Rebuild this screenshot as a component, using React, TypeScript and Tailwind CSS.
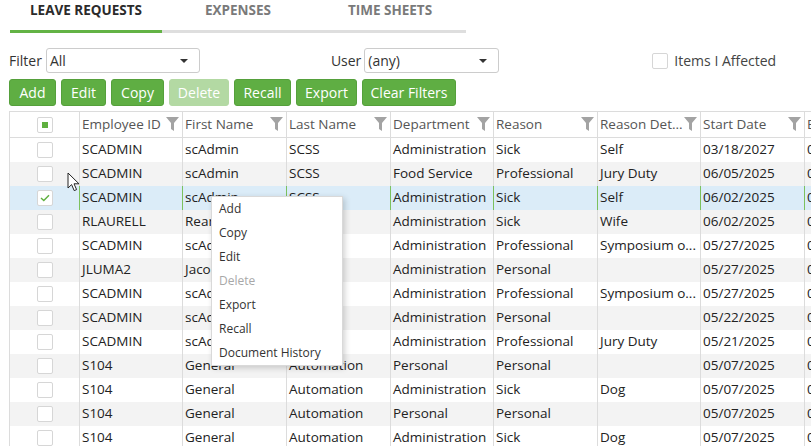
import { useState } from "react";

interface Row {
  empId: string;
  first: string;
  last: string;
  dept: string;
  reason: string;
  detail: string;
  start: string;
  end: string;
}

const rows: Row[] = [
  { empId: "SCADMIN", first: "scAdmin", last: "SCSS", dept: "Administration", reason: "Sick", detail: "Self", start: "03/18/2027", end: "03/18/2027" },
  { empId: "SCADMIN", first: "scAdmin", last: "SCSS", dept: "Food Service", reason: "Professional", detail: "Jury Duty", start: "06/05/2025", end: "06/05/2025" },
  { empId: "SCADMIN", first: "scAdmin", last: "SCSS", dept: "Administration", reason: "Sick", detail: "Self", start: "06/02/2025", end: "06/02/2025" },
  { empId: "RLAURELL", first: "Reanna", last: "Laurell", dept: "Administration", reason: "Sick", detail: "Wife", start: "06/02/2025", end: "06/02/2025" },
  { empId: "SCADMIN", first: "scAdmin", last: "SCSS", dept: "Administration", reason: "Professional", detail: "Symposium o...", start: "05/27/2025", end: "05/28/2025" },
  { empId: "JLUMA2", first: "Jacob", last: "Luma", dept: "Administration", reason: "Personal", detail: "", start: "05/27/2025", end: "05/27/2025" },
  { empId: "SCADMIN", first: "scAdmin", last: "SCSS", dept: "Administration", reason: "Professional", detail: "Symposium o...", start: "05/27/2025", end: "05/28/2025" },
  { empId: "SCADMIN", first: "scAdmin", last: "SCSS", dept: "Administration", reason: "Personal", detail: "", start: "05/22/2025", end: "05/22/2025" },
  { empId: "SCADMIN", first: "scAdmin", last: "SCSS", dept: "Administration", reason: "Professional", detail: "Jury Duty", start: "05/21/2025", end: "05/21/2025" },
  { empId: "S104", first: "General", last: "Automation", dept: "Personal", reason: "Personal", detail: "", start: "05/07/2025", end: "05/07/2025" },
  { empId: "S104", first: "General", last: "Automation", dept: "Administration", reason: "Sick", detail: "Dog", start: "05/07/2025", end: "05/07/2025" },
  { empId: "S104", first: "General", last: "Automation", dept: "Personal", reason: "Personal", detail: "", start: "05/07/2025", end: "05/07/2025" },
  { empId: "S104", first: "General", last: "Automation", dept: "Administration", reason: "Sick", detail: "Dog", start: "05/07/2025", end: "05/07/2025" },
];

const columns = [
  { label: "Employee ID", width: "w-[103px]", key: "empId" },
  { label: "First Name", width: "w-[104px]", key: "first" },
  { label: "Last Name", width: "w-[104px]", key: "last" },
  { label: "Department", width: "w-[103px]", key: "dept" },
  { label: "Reason", width: "w-[104px]", key: "reason" },
  { label: "Reason Det...", width: "w-[103px]", key: "detail" },
  { label: "Start Date", width: "w-[104px]", key: "start" },
  { label: "End Date", width: "w-[104px]", key: "end" },
] as const;

const buttons = [
  { label: "Add", width: "w-[47px]" },
  { label: "Edit", width: "w-[45px]" },
  { label: "Copy", width: "w-[53px]" },
  { label: "Delete", width: "w-[60px]", disabled: true },
  { label: "Recall", width: "w-[57px]" },
  { label: "Export", width: "w-[61px]" },
  { label: "Clear Filters", width: "w-[94px]" },
];

const menuItems = ["Add", "Copy", "Edit", "Delete", "Export", "Recall", "Document History"];

function Funnel() {
  return (
    <svg width="13" height="14" viewBox="0 0 13 14" className="shrink-0">
      <path d="M0 0H13L8 6V14L5 12V6Z" fill="#a3a3a3" />
    </svg>
  );
}

function Caret() {
  return (
    <svg width="8" height="4" viewBox="0 0 8 4">
      <path d="M0 0H8L4 4Z" fill="#333" />
    </svg>
  );
}

function Checkbox({ checked, partial }: { checked?: boolean; partial?: boolean }) {
  return (
    <div className="w-[16px] h-[16px] rounded-[2px] border border-[#d6d6d6] bg-white flex items-center justify-center">
      {partial && <div className="w-[6px] h-[6px] bg-[#5fb03f]" />}
      {checked && (
        <svg width="10" height="8" viewBox="0 0 10 8">
          <path d="M1 4L3.8 6.6L9 1.2" fill="none" stroke="#5fb03f" strokeWidth="1.4" />
        </svg>
      )}
    </div>
  );
}

export default function App() {
  const [tab] = useState(0);

  return (
    <div className="relative w-[811px] h-[446px] overflow-hidden bg-white text-[#333]" style={{ fontFamily: '"Open Sans", sans-serif' }}>
      {/* Tabs */}
      <div className="flex ml-[10px]">
        {["LEAVE REQUESTS", "EXPENSES", "TIME SHEETS"].map((t, i) => (
          <div
            key={t}
            className={`w-[152px] h-[33px] flex items-start justify-center text-[13.5px] leading-[20px] font-bold border-b-[3px] ${
              i === tab ? "text-[#2b2b2b] border-[#63b345]" : "text-[#7a7a7a] border-[#dedede]"
            }`}
          >
            {t}
          </div>
        ))}
      </div>

      {/* Filters */}
      <div className="flex items-center mt-[15px] ml-[9px] h-[25px] text-[14px]">
        <span className="text-[#333]">Filter</span>
        <div className="ml-[4px] w-[154px] h-[25px] border border-[#ccc] rounded-[3px] flex items-center justify-between pl-[3px] pr-[11px]">
          <span>All</span>
          <Caret />
        </div>
        <span className="ml-[131px]">User</span>
        <div className="ml-[3px] w-[135px] h-[25px] border border-[#ccc] rounded-[3px] flex items-center justify-between pl-[3px] pr-[11px]">
          <span>(any)</span>
          <Caret />
        </div>
        <div className="ml-[153px] w-[16px] h-[16px] border border-[#d6d6d6] rounded-[2px]" />
        <span className="ml-[6px] text-[#444]">Items I Affected</span>
      </div>

      {/* Action buttons */}
      <div className="flex gap-[5px] mt-[6px] ml-[9px]">
        {buttons.map((b) => (
          <div
            key={b.label}
            className={`${b.width} h-[27px] rounded-[3px] flex items-center justify-center text-[14px] text-white border ${
              b.disabled ? "bg-[#b3d9a3] border-[#b3d9a3]" : "bg-[#5fae43] border-[#55a03b]"
            }`}
          >
            {b.label}
          </div>
        ))}
      </div>

      {/* Grid */}
      <div className="mt-[5px] ml-[9px] w-[900px] border-l border-t border-[#dcdcdc] text-[13.5px]">
        <div className="flex h-[26px] border-b border-[#dcdcdc] text-[#555]">
          <div className="w-[70px] shrink-0 flex items-center justify-center border-r border-[#dcdcdc]">
            <Checkbox partial />
          </div>
          {columns.map((c) => (
            <div key={c.label} className={`${c.width} shrink-0 flex items-center justify-between pl-[2px] pr-[3px] pb-[1px] border-r border-[#dcdcdc]`}>
              <span className="whitespace-nowrap">{c.label}</span>
              <Funnel />
            </div>
          ))}
        </div>
        {rows.map((r, i) => {
          const selected = i === 2;
          const bg = selected ? "bg-[#dbecf8]" : i % 2 === 1 ? "bg-[#f3f3f3]" : "bg-white";
          const line = selected ? "border-[#7cc15e]" : "border-[#dcdcdc]";
          return (
            <div key={i} className={`flex h-[24px] ${bg}`}>
              <div className={`w-[70px] shrink-0 flex items-center justify-center border-r ${line}`}>
                <Checkbox checked={selected} />
              </div>
              {columns.map((c) => (
                <div key={c.key} className={`${c.width} shrink-0 flex items-center pl-[2px] pb-[1px] border-r ${line} whitespace-nowrap overflow-hidden text-[#222]`}>
                  {r[c.key]}
                </div>
              ))}
            </div>
          );
        })}
      </div>

      {/* Context menu */}
      <div className="absolute left-[211px] top-[196px] w-[132px] bg-white border border-[#d9d9d9] shadow-[2px_2px_6px_rgba(0,0,0,0.18)] text-[12px]">
        {menuItems.map((m) => (
          <div key={m} className={`h-[24px] flex items-center pl-[7px] ${m === "Delete" ? "text-[#a8a8a8]" : "text-[#333]"}`}>
            {m}
          </div>
        ))}
      </div>

      {/* Mouse cursor */}
      <svg className="absolute left-[67px] top-[172px]" width="14" height="20" viewBox="0 0 14 20">
        <path d="M1 1V16L4.6 12.6L7.2 18.6L9.6 17.6L7 11.8H12Z" fill="#fff" stroke="#222" strokeWidth="1" strokeLinejoin="round" />
      </svg>
    </div>
  );
}
